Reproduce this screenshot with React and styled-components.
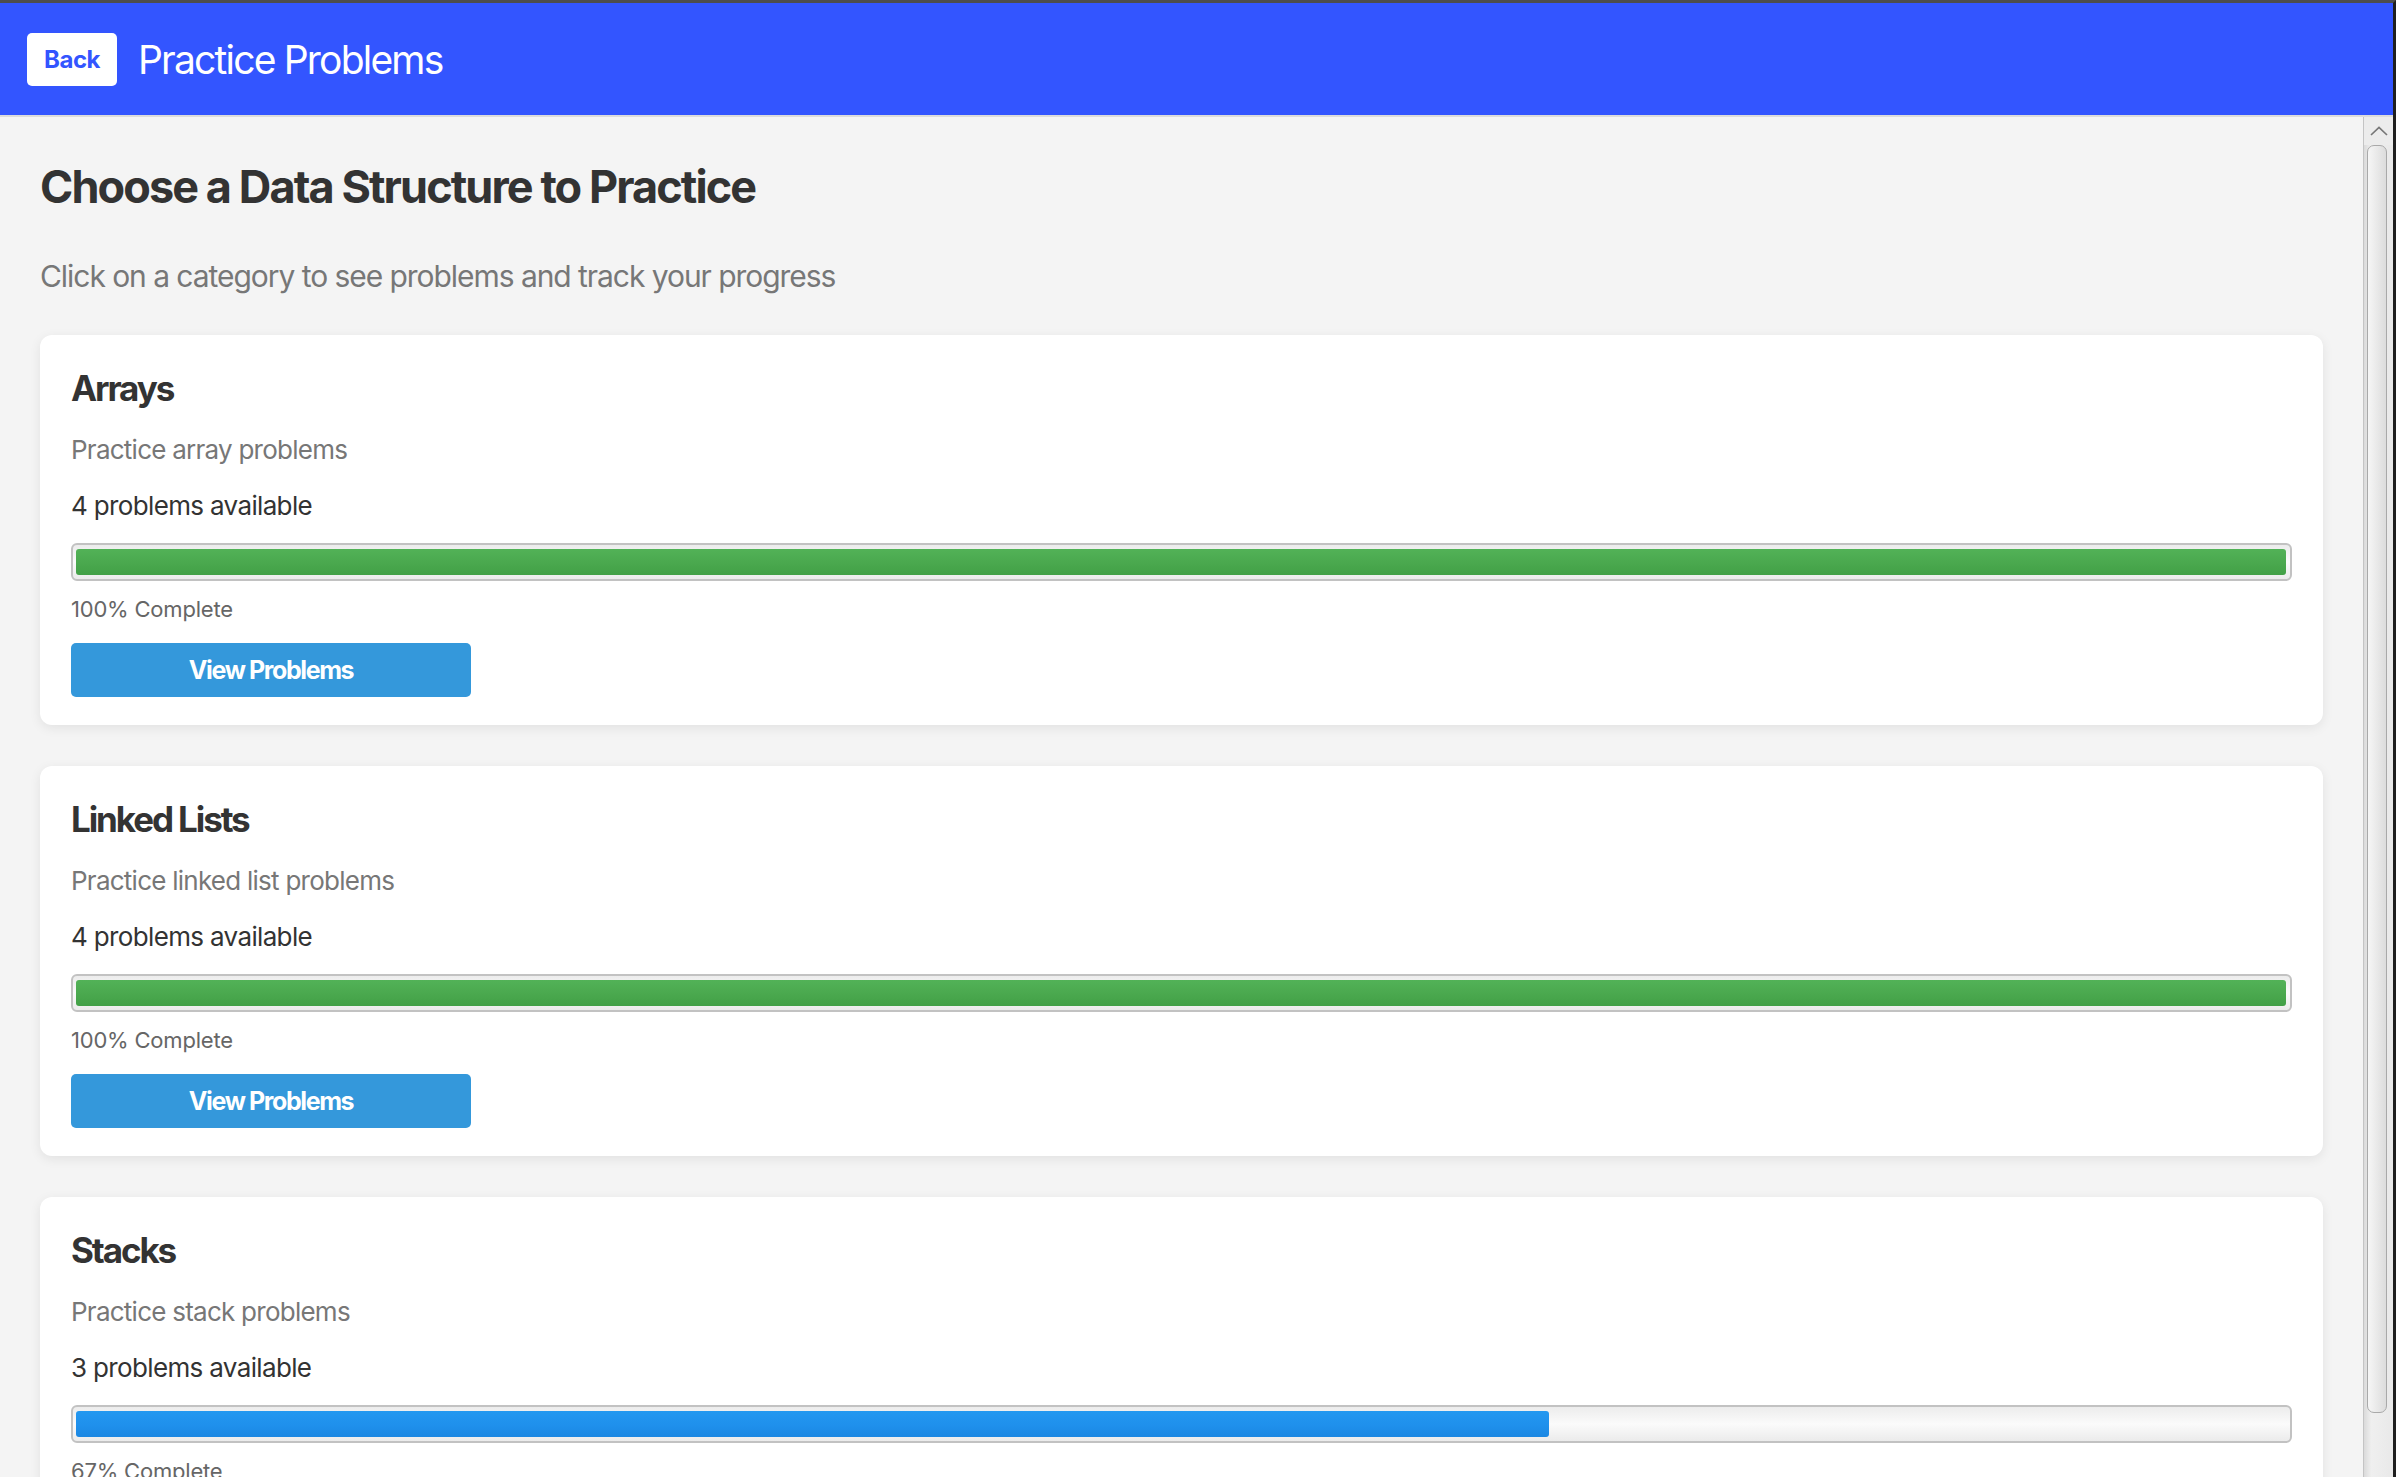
import React from "react";
import styled, { createGlobalStyle } from "styled-components";

const categories = [
  { name: "Arrays", desc: "Practice array problems", count: 4, done: 4 },
  { name: "Linked Lists", desc: "Practice linked list problems", count: 4, done: 4 },
  { name: "Stacks", desc: "Practice stack problems", count: 3, done: 2 },
];

const GlobalStyle = createGlobalStyle`
  html, body {
    margin: 0;
    height: 100%;
    overflow: hidden;
  }
  body {
    font-family: Inter, "Noto Sans", sans-serif;
    background: #f4f4f4;
  }
`;

const Frame = styled.div`
  height: 100vh;
  display: flex;
  flex-direction: column;
  border-top: 3px solid #4d4d4d;
  border-right: 3px solid #1f1f1f;
  box-sizing: border-box;
`;

const Header = styled.header`
  flex: none;
  height: 112px;
  display: flex;
  align-items: center;
  gap: 21px;
  padding: 0 27px;
  background: #3355ff;
  border-bottom: 2px solid #dcdcdc;
`;

const BackBtn = styled.button`
  width: 90px;
  height: 53px;
  border: none;
  border-radius: 5px;
  background: #fff;
  color: #3355ff;
  font-family: inherit;
  font-size: 24px;
  font-weight: 700;
  letter-spacing: -0.5px;
  cursor: pointer;
`;

const HeaderTitle = styled.h1`
  margin: 0;
  color: #fff;
  font-size: 39px;
  font-weight: 400;
  letter-spacing: -1.8px;
`;

const Body = styled.div`
  flex: 1;
  min-height: 0;
  display: flex;
`;

const Main = styled.main`
  flex: 1;
  min-width: 0;
  overflow: hidden;
  padding: 43px 40px 0;
  background: #f4f4f4;
`;

/* drawn copy of the window's native scrollbar */
const ScrollBar = styled.div`
  flex: none;
  width: 30px;
  display: flex;
  flex-direction: column;
  box-sizing: border-box;
  border-left: 1px solid #c4c4c4;
  background: linear-gradient(to right, #dadada, #efefef 25%, #e9e9e9);
`;

const ScrollArrow = styled.div`
  height: 28px;
  display: flex;
  align-items: center;
  justify-content: center;
  background: #ececec;
`;

const Thumb = styled.div`
  height: ${(p) => p.$size}px;
  margin: 0 6px 0 3px;
  box-sizing: border-box;
  border: 1px solid #a9a9a9;
  border-radius: 7px;
  background: linear-gradient(to right, #f6f6f6, #dcdcdc);
`;

const PageTitle = styled.h2`
  margin: 0;
  font-size: 45px;
  line-height: 54px;
  font-weight: 700;
  color: #333;
  letter-spacing: -1.9px;
`;

const Lead = styled.p`
  margin: 44px 0 41px;
  font-size: 30px;
  line-height: 36px;
  color: #777;
  letter-spacing: -1.05px;
`;

const Card = styled.section`
  background: #fff;
  border-radius: 12px;
  padding: 32px 31px 28px;
  margin-bottom: 41px;
  box-shadow: 0 3px 12px rgba(0, 0, 0, 0.08);
`;

const CardTitle = styled.h3`
  margin: 0;
  font-size: 35px;
  line-height: 42px;
  font-weight: 700;
  color: #333;
  letter-spacing: -2.1px;
`;

const CardText = styled.p`
  margin: ${(p) => p.$gap}px 0 0;
  font-size: 26px;
  line-height: 31px;
  color: ${(p) => (p.$muted ? "#777" : "#333")};
  letter-spacing: ${(p) => (p.$muted ? "-0.75px" : "-0.65px")};
`;

const Track = styled.div`
  margin-top: 22px;
  height: 38px;
  box-sizing: border-box;
  border: 2px solid #c2c2c2;
  border-radius: 6px;
  padding: 4px 4px 4px 3px;
  background: linear-gradient(#ececec, #fbfbfb 50%, #ebebeb);
`;

const Fill = styled.div`
  height: 100%;
  border-radius: 3px;
  background: ${(p) =>
    p.$full
      ? "linear-gradient(#52b257, #4aa84e 55%, #42a046)"
      : "linear-gradient(#2398f0, #1f90ec 55%, #1b87e2)"};
`;

const Label = styled.div`
  margin-top: 15px;
  font-size: 22px;
  line-height: 26px;
  color: #666;
  letter-spacing: -0.2px;
`;

const ViewBtn = styled.button`
  display: block;
  margin-top: 21px;
  width: 400px;
  height: 54px;
  border: none;
  border-radius: 5px;
  background: #3498db;
  color: #fff;
  font-family: inherit;
  font-size: 25px;
  font-weight: 700;
  letter-spacing: -1.4px;
  cursor: pointer;
`;

const CategoryCard = ({ item }) => {
  const ratio = item.done / item.count;
  const pct = Math.round(ratio * 100);
  return (
    <Card>
      <CardTitle>{item.name}</CardTitle>
      <CardText $muted $gap={25}>
        {item.desc}
      </CardText>
      <CardText $gap={25}>{item.count} problems available</CardText>
      <Track>
        <Fill $full={pct === 100} style={{ width: `${ratio * 100}%` }} />
      </Track>
      <Label>{pct}% Complete</Label>
      <ViewBtn>View Problems</ViewBtn>
    </Card>
  );
};

const App = () => {
  return (
    <>
      <GlobalStyle />
      <Frame>
        <Header>
          <BackBtn>Back</BackBtn>
          <HeaderTitle>Practice Problems</HeaderTitle>
        </Header>
        <Body>
          <Main>
            <PageTitle>Choose a Data Structure to Practice</PageTitle>
            <Lead>Click on a category to see problems and track your progress</Lead>
            {categories.map((c) => (
              <CategoryCard key={c.name} item={c} />
            ))}
          </Main>
          <ScrollBar>
            <ScrollArrow>
              <svg width="20" height="12" viewBox="0 0 20 12">
                <path d="M2 10 L10 2.5 L18 10" fill="none" stroke="#777" strokeWidth="1.7" />
              </svg>
            </ScrollArrow>
            <Thumb $size={1268} />
          </ScrollBar>
        </Body>
      </Frame>
    </>
  );
};

export default App;
